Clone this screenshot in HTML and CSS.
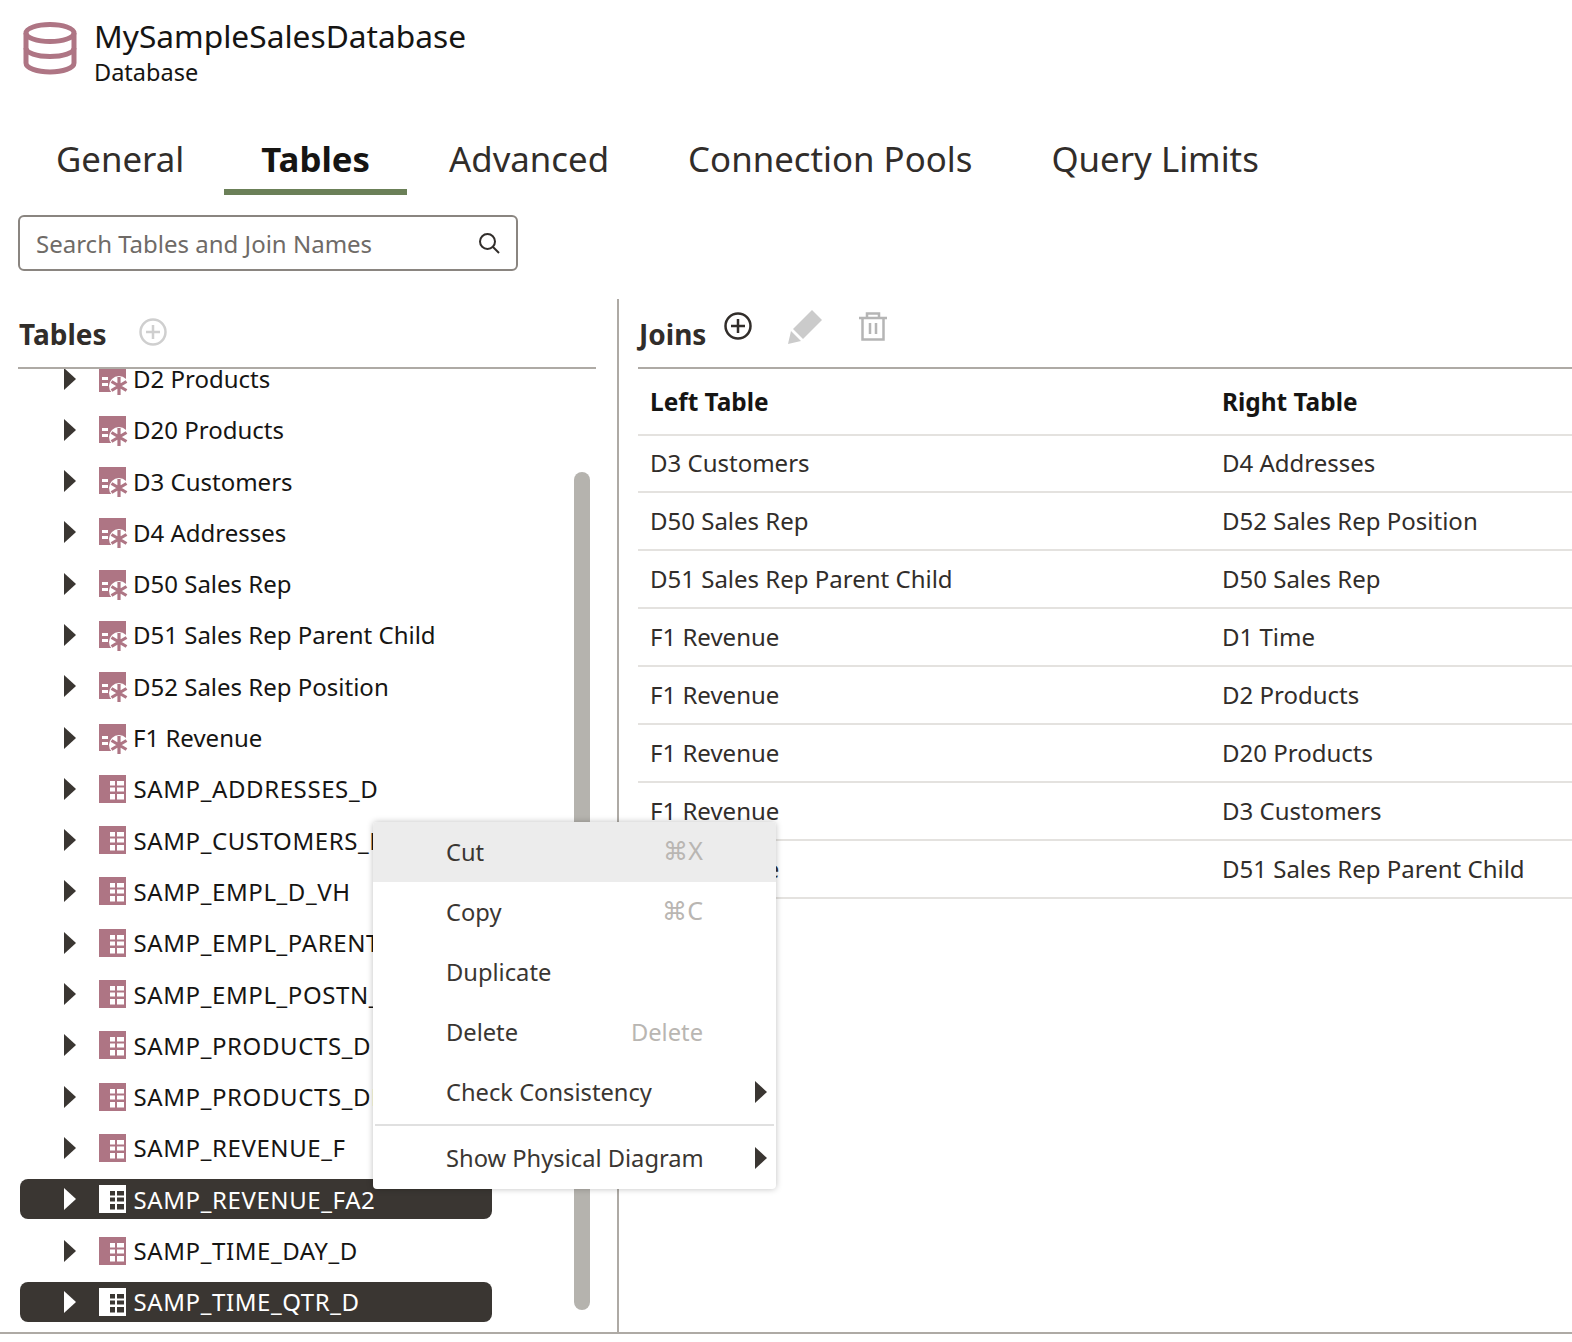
FILE: index.html
```html
<!DOCTYPE html>
<html lang="en">
<head>
    <meta charset="UTF-8">
    <meta name="viewport" content="width=device-width, initial-scale=1.0">
    <title>MySampleSalesDatabase</title>
    <link rel="stylesheet" href="styles.css">
</head>
<body>
    <svg class="defs" width="0" height="0">
        <symbol id="ico-alias" viewBox="0 -1 30 30" overflow="visible">
            <path d="M0 0H27V27H0Z" fill="#ae7584"/>
            <circle cx="20" cy="21" r="10" fill="#fff"/>
            <path d="M0 27H15V30H30V13H27V27Z" fill="#fff"/>
            <path d="M3 12H9V15H3ZM3 18H9V21H3Z" fill="#fff"/>
            <path d="M20 12V30M12.500 16.500L27.500 25.500M12.500 25.500L27.500 16.500" stroke="#ae7584" stroke-width="3.200" fill="none"/>
        </symbol>
        <symbol id="ico-table" viewBox="0 0 30 30">
            <path d="M0 1H27V29H0Z" fill="#ae7584"/>
            <path d="M11 7H16V11.500H11ZM18 7H25V11.500H18ZM11 13.500H16V17.500H11ZM18 13.500H25V17.500H18ZM11 20H16V25.500H11ZM18 20H25V25.500H18Z" fill="#fff"/>
        </symbol>
        <symbol id="ico-table-sel" viewBox="0 0 30 30">
            <path d="M0 1H27V29H0Z" fill="#fff"/>
            <path d="M11 7H16V11.500H11ZM18 7H25V11.500H18ZM11 13.500H16V17.500H11ZM18 13.500H25V17.500H18ZM11 20H16V25.500H11ZM18 20H25V25.500H18Z" fill="#3a3632"/>
        </symbol>
    </svg>

    <div class="page">
        <!-- Header -->
        <div class="db-header">
            <svg class="db-icon" width="54" height="54" viewBox="0 0 54 54" fill="none" stroke="#ae7584" stroke-width="5">
                <ellipse cx="27" cy="12" rx="24" ry="8.500"/>
                <path d="M3 12V42C3 47 14 51 27 51S51 47 51 42V12"/>
                <path d="M3 27C3 32 14 35.500 27 35.500S51 32 51 27"/>
            </svg>
            <div class="db-title">
                <div class="db-name">MySampleSalesDatabase</div>
                <div class="db-type">Database</div>
            </div>
        </div>

        <!-- Tabs -->
        <div class="tabs">
            <div class="tab">General</div>
            <div class="tab active">Tables</div>
            <div class="tab">Advanced</div>
            <div class="tab">Connection Pools</div>
            <div class="tab">Query Limits</div>
        </div>

        <!-- Search -->
        <div class="search-box">
            <span class="search-text">Search Tables and Join Names</span>
            <svg width="22" height="22" viewBox="0 0 22 22" fill="none" stroke="#312d2a" stroke-width="2">
                <circle cx="9.500" cy="9.500" r="7.500"/>
                <path d="M15 15L21 21"/>
            </svg>
        </div>

        <div class="panes">
            <!-- Tables -->
            <div class="tables-pane">
                <div class="pane-head">
                    <h3>Tables</h3>
                    <svg class="add-table" width="28" height="28" viewBox="0 0 28 28" fill="none" stroke="#cfcfcf" stroke-width="2.500">
                        <circle cx="14" cy="14" r="12.500"/>
                        <path d="M14 7V21M7 14H21"/>
                    </svg>
                </div>
                <div class="tree-wrap">
                    <div class="tree">
                        <div class="tree-row"><span class="arrow"></span><svg class="tree-icon"><use href="#ico-alias"/></svg><span>D2 Products</span></div>
                        <div class="tree-row"><span class="arrow"></span><svg class="tree-icon"><use href="#ico-alias"/></svg><span>D20 Products</span></div>
                        <div class="tree-row"><span class="arrow"></span><svg class="tree-icon"><use href="#ico-alias"/></svg><span>D3 Customers</span></div>
                        <div class="tree-row"><span class="arrow"></span><svg class="tree-icon"><use href="#ico-alias"/></svg><span>D4 Addresses</span></div>
                        <div class="tree-row"><span class="arrow"></span><svg class="tree-icon"><use href="#ico-alias"/></svg><span>D50 Sales Rep</span></div>
                        <div class="tree-row"><span class="arrow"></span><svg class="tree-icon"><use href="#ico-alias"/></svg><span>D51 Sales Rep Parent Child</span></div>
                        <div class="tree-row"><span class="arrow"></span><svg class="tree-icon"><use href="#ico-alias"/></svg><span>D52 Sales Rep Position</span></div>
                        <div class="tree-row"><span class="arrow"></span><svg class="tree-icon"><use href="#ico-alias"/></svg><span>F1 Revenue</span></div>
                        <div class="tree-row caps"><span class="arrow"></span><svg class="tree-icon"><use href="#ico-table"/></svg><span>SAMP_ADDRESSES_D</span></div>
                        <div class="tree-row caps"><span class="arrow"></span><svg class="tree-icon"><use href="#ico-table"/></svg><span>SAMP_CUSTOMERS_D</span></div>
                        <div class="tree-row caps"><span class="arrow"></span><svg class="tree-icon"><use href="#ico-table"/></svg><span>SAMP_EMPL_D_VH</span></div>
                        <div class="tree-row caps"><span class="arrow"></span><svg class="tree-icon"><use href="#ico-table"/></svg><span>SAMP_EMPL_PARENT_CHILD_MAP</span></div>
                        <div class="tree-row caps"><span class="arrow"></span><svg class="tree-icon"><use href="#ico-table"/></svg><span>SAMP_EMPL_POSTN_D</span></div>
                        <div class="tree-row caps"><span class="arrow"></span><svg class="tree-icon"><use href="#ico-table"/></svg><span>SAMP_PRODUCTS_D</span></div>
                        <div class="tree-row caps"><span class="arrow"></span><svg class="tree-icon"><use href="#ico-table"/></svg><span>SAMP_PRODUCTS_DR</span></div>
                        <div class="tree-row caps"><span class="arrow"></span><svg class="tree-icon"><use href="#ico-table"/></svg><span>SAMP_REVENUE_F</span></div>
                        <div class="tree-row caps selected"><span class="arrow"></span><svg class="tree-icon"><use href="#ico-table-sel"/></svg><span>SAMP_REVENUE_FA2</span></div>
                        <div class="tree-row caps"><span class="arrow"></span><svg class="tree-icon"><use href="#ico-table"/></svg><span>SAMP_TIME_DAY_D</span></div>
                        <div class="tree-row caps selected"><span class="arrow"></span><svg class="tree-icon"><use href="#ico-table-sel"/></svg><span>SAMP_TIME_QTR_D</span></div>
                    </div>
                    <div class="scrollbar"></div>
                </div>
            </div>

            <!-- Joins -->
            <div class="joins-pane">
                <div class="pane-head">
                    <h3>Joins</h3>
                    <svg class="add-join" width="28" height="28" viewBox="0 0 28 28" fill="none" stroke="#312d2a" stroke-width="2.500">
                        <circle cx="14" cy="14" r="12.500"/>
                        <path d="M14 7V21M7 14H21"/>
                    </svg>
                    <svg class="edit-join" width="34" height="34" viewBox="0 0 34 34" fill="#cbcbcb">
                        <path d="M24 0L34 10L15 29L5 19Z"/>
                        <path d="M3 21L13 31L0 34Z"/>
                    </svg>
                    <svg class="del-join" width="28" height="29" viewBox="0 0 28 29" fill="none" stroke="#b5b5b5" stroke-width="2.500">
                        <path d="M0 6H28M8 6V1.500H20V6M3.500 6V27.500H24.500V6M11 11V22M17 11V22"/>
                    </svg>
                </div>
                <table class="joins-table">
                    <thead>
                        <tr><th class="col-left">Left Table</th><th>Right Table</th></tr>
                    </thead>
                    <tbody>
                        <tr><td>D3 Customers</td><td>D4 Addresses</td></tr>
                        <tr><td>D50 Sales Rep</td><td>D52 Sales Rep Position</td></tr>
                        <tr><td>D51 Sales Rep Parent Child</td><td>D50 Sales Rep</td></tr>
                        <tr><td>F1 Revenue</td><td>D1 Time</td></tr>
                        <tr><td>F1 Revenue</td><td>D2 Products</td></tr>
                        <tr><td>F1 Revenue</td><td>D20 Products</td></tr>
                        <tr><td>F1 Revenue</td><td>D3 Customers</td></tr>
                        <tr><td>F1 Revenue</td><td>D51 Sales Rep Parent Child</td></tr>
                    </tbody>
                </table>
            </div>
        </div>

        <!-- Context Menu -->
        <div class="context-menu">
            <div class="menu-item hover"><span>Cut</span><span class="shortcut key">⌘X</span></div>
            <div class="menu-item"><span>Copy</span><span class="shortcut key">⌘C</span></div>
            <div class="menu-item"><span>Duplicate</span></div>
            <div class="menu-item"><span>Delete</span><span class="shortcut">Delete</span></div>
            <div class="menu-item"><span>Check Consistency</span><span class="arrow sub"></span></div>
            <div class="menu-sep"></div>
            <div class="menu-item"><span>Show Physical Diagram</span><span class="arrow sub"></span></div>
        </div>
    </div>
</body>
</html>
```
FILE: styles.css
```css
/* Base Styles */
* {
    margin: 0;
    padding: 0;
    box-sizing: border-box;
}

body {
    background: #fff;
    color: #161513;
    font-family: 'Noto Sans', sans-serif;
    font-size: 24px;
}

.defs {
    position: absolute;
}

.page {
    position: relative;
    width: 1572px;
    height: 1342px;
    overflow: hidden;
}

/* Header */
.db-header {
    display: flex;
    align-items: flex-start;
    height: 110px;
    padding: 21px 0 0 23px;
}

.db-icon {
    margin-right: 17px;
}

.db-name {
    font-size: 31.700px;
    line-height: 30px;
}

.db-type {
    font-size: 23.500px;
    line-height: 42px;
}

/* Tabs */
.tabs {
    display: flex;
    gap: 5px;
    height: 85px;
    padding-left: 19px;
}

.tab {
    padding: 25px 37px 0;
    height: 85px;
    font-size: 34.800px;
    line-height: 48px;
    color: #312d2a;
}

.tab:first-child {
    padding-right: 35px;
}

.tab.active {
    font-weight: 700;
    color: #161513;
    border-bottom: 6px solid #6b8058;
}

/* Search */
.search-box {
    display: flex;
    align-items: center;
    justify-content: space-between;
    width: 500px;
    height: 56px;
    margin: 20px 0 0 18px;
    padding: 0 16px;
    border: 2px solid #8a8580;
    border-radius: 6px;
}

.search-text {
    color: #6f6b67;
}

/* Panes */
.panes {
    display: flex;
    height: 1035px;
    margin-top: 28px;
    border-bottom: 2px solid #aeaaa5;
}

.tables-pane {
    flex-shrink: 0;
    width: 619px;
    padding: 0 21px 0 18px;
    border-right: 2px solid #aeaaa5;
}

.joins-pane {
    flex-grow: 1;
    min-width: 0;
    padding-left: 19px;
}

.pane-head {
    display: flex;
    height: 70px;
    border-bottom: 2px solid #aeaaa5;
}

.pane-head h3 {
    font-size: 28px;
    line-height: 38px;
    margin: 16px 0 0 1px;
    color: #312d2a;
}

.add-table {
    margin: 19px 0 0 32px;
}

.add-join {
    margin: 13px 0 0 18px;
}

.edit-join {
    margin: 11px 0 0 36px;
}

.del-join {
    margin: 13px 0 0 37px;
}

/* Tree */
.tree-wrap {
    position: relative;
    height: 963px;
    overflow: hidden;
}

.tree {
    margin-top: -10.500px;
}

.tree-row {
    display: flex;
    align-items: center;
    width: 472px;
    height: 40px;
    margin: 0 0 11.300px 2px;
    border-radius: 8px;
    white-space: nowrap;
}

.tree-row.caps {
    letter-spacing: 0.600px;
}

.tree-row.selected {
    background: #3a3632;
    color: #fff;
}

.arrow {
    display: inline-block;
    margin-left: 44px;
    border-left: 12px solid #3a3632;
    border-top: 11px solid transparent;
    border-bottom: 11px solid transparent;
}

.tree-row.selected .arrow {
    border-left-color: #fff;
}

.tree-icon {
    width: 30px;
    height: 30px;
    margin: 0 4px 0 23px;
    flex-shrink: 0;
    overflow: visible;
}

.caps .tree-icon {
    margin-right: 4.500px;
}

.scrollbar {
    position: absolute;
    top: 103px;
    left: 556px;
    width: 16px;
    height: 838px;
    border-radius: 8px;
    background: #b5b3ae;
}

/* Joins Table */
.joins-table {
    width: 100%;
    border-collapse: collapse;
    table-layout: fixed;
}

.joins-table th,
.joins-table td {
    padding-left: 12px;
    text-align: left;
    border-bottom: 2px solid #e4e2df;
    white-space: nowrap;
}

.joins-table th {
    height: 66px;
    font-size: 24.400px;
    font-weight: 700;
}

.joins-table td {
    height: 58px;
    padding-bottom: 2px;
    color: #312d2a;
}

.joins-table tbody tr:first-child td {
    height: 57px;
}

.col-left {
    width: 572px;
}

/* Context Menu */
.context-menu {
    position: absolute;
    top: 822px;
    left: 373px;
    width: 403px;
    height: 367px;
    background: #fff;
    border-radius: 4px;
    box-shadow: 0 0 6px rgba(0, 0, 0, 0.25);
    color: #3a3632;
    font-size: 23.700px;
}

.menu-item {
    display: flex;
    align-items: center;
    justify-content: space-between;
    height: 60px;
    padding: 0 73px;
}

.menu-item:first-child {
    border-radius: 4px 4px 0 0;
}

.menu-item.hover {
    background: #ececec;
}

.shortcut {
    color: #b9b6b2;
}

.shortcut.key {
    margin-top: -4px;
    font-size: 25px;
}

.arrow.sub {
    margin: 0 -64px 0 0;
}

.menu-sep {
    height: 2px;
    margin: 2px 2px;
    background: #e0e0e0;
}
```
